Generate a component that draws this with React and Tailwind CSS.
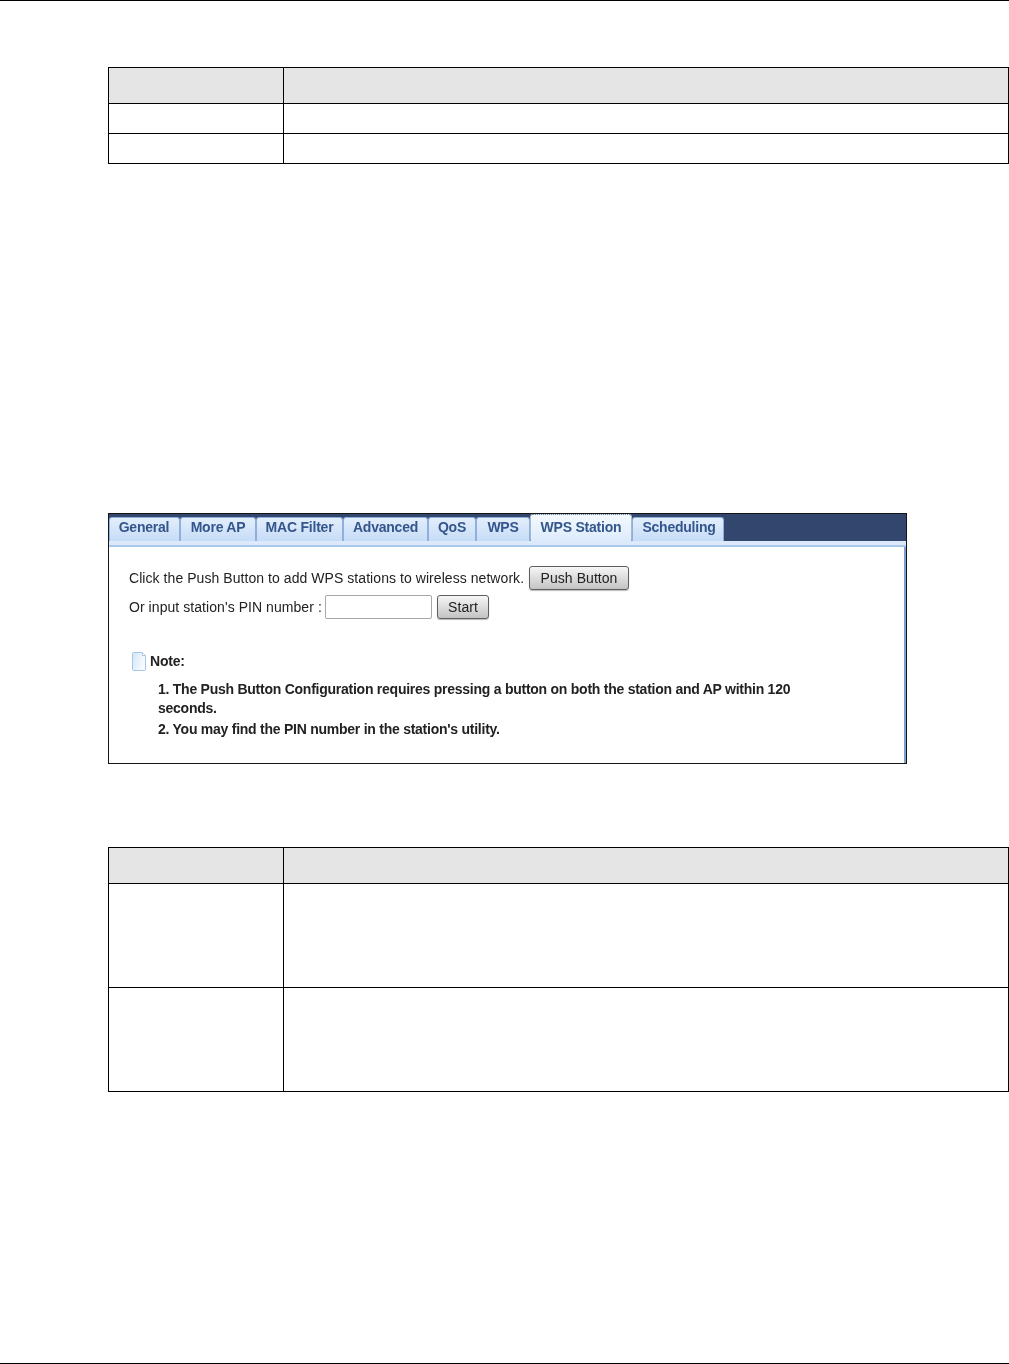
const tabs = [
  { label: "General", width: "w-[71px]", gap: "pr-[1px]" },
  { label: "More AP", width: "w-[76px]", gap: "" },
  { label: "MAC Filter", width: "w-[87px]", gap: "" },
  { label: "Advanced", width: "w-[85px]", gap: "" },
  { label: "QoS", width: "w-[48px]", gap: "" },
  { label: "WPS", width: "w-[54px]", gap: "" },
  { label: "WPS Station", width: "w-[102px]", gap: "", active: true },
  { label: "Scheduling", width: "w-[92px]", gap: "pl-[2px]" },
];

function SpecTable({ rows }) {
  return (
    <div className="ml-[108px] w-[901px] border-t border-l border-r border-black">
      {rows.map((row, i) => (
        <div key={i} className={`flex border-b border-black ${row.height} ${i === 0 ? "bg-[#e5e5e5]" : "bg-white"}`}>
          <div className="w-[175px] border-r border-black" />
          <div className="flex-1" />
        </div>
      ))}
    </div>
  );
}

function Tab({ label, width, gap, active }) {
  return (
    <div
      className={`flex justify-center rounded-t-[3px] border-x border-t text-[14px] font-bold leading-[19px] tracking-[-0.22px] text-[#34568c] ${width} ${gap} ${
        active
          ? "h-[27px] border-dotted border-[#6f7f96] bg-gradient-to-b from-[#f4f9fe] to-[#dcebfc] pt-[3px]"
          : "h-[24px] border-[#8fb0dc] bg-gradient-to-b from-[#e3eefb] to-[#c6dcf7]"
      }`}
    >
      {label}
    </div>
  );
}

function Button({ children, width }) {
  return (
    <button className={`h-[24px] rounded-[3px] border border-[#5f5f5f] bg-gradient-to-b from-[#f6f6f6] to-[#c4c4c4] text-[14px] leading-none text-[#222] shadow-[0_1px_1px_#bbb] ${width}`}>
      {children}
    </button>
  );
}

function NoteIcon() {
  return (
    <svg width="14" height="19" viewBox="0 0 14 19" className="shrink-0">
      <defs>
        <linearGradient id="note-fill" x1="0" y1="0" x2="1" y2="0.4">
          <stop offset="0" stopColor="#d3e5f8" />
          <stop offset="1" stopColor="#f8fbfe" />
        </linearGradient>
      </defs>
      <path d="M0.5 1.5 Q0.5 0.5 1.5 0.5 H10.5 L13.5 3.5 V17.5 Q13.5 18.5 12.5 18.5 H1.5 Q0.5 18.5 0.5 17.5 Z" fill="url(#note-fill)" stroke="#a6c6e8" />
      <path d="M10.5 0.5 V3.5 H13.5" fill="#fff" stroke="#a6c6e8" />
    </svg>
  );
}

export default function App() {
  return (
    <div className="flex h-[1364px] w-[1009px] flex-col overflow-hidden bg-white font-['Liberation_Sans',Arial,sans-serif]">
      <div className="h-px bg-black" />

      <div className="mt-[66px]">
        <SpecTable rows={[{ height: "h-[36px]" }, { height: "h-[30px]" }, { height: "h-[30px]" }]} />
      </div>

      <div className="ml-[108px] mt-[349px] h-[251px] w-[799px] border border-[#151515] bg-white blur-[0.3px]">
        <div className="flex h-[27px] items-end bg-[#33466e]">
          {tabs.map((tab) => (
            <Tab key={tab.label} {...tab} />
          ))}
        </div>
        <div className="h-[6px] border-b-2 border-[#a9c8ee] bg-[#dbe9fb]" />
        <div className="h-[216px] border-r-2 border-[#7d9fd0] pl-[20px] pt-[19px] text-[14px] tracking-[0.06px] text-[#222]">
          <div className="flex h-[24px] items-center">
            <span className="w-[400px]">Click the Push Button to add WPS stations to wireless network.</span>
            <Button width="w-[100px]">Push Button</Button>
          </div>
          <div className="mt-[5px] flex h-[24px] items-center">
            <span className="w-[196px]">Or input station's PIN number :</span>
            <div className="h-[24px] w-[107px] rounded-[2px] border border-[#a8a8a8] bg-white" />
            <div className="ml-[5px] flex">
              <Button width="w-[52px]">Start</Button>
            </div>
          </div>
          <div className="ml-[3px] mt-[32px] flex items-center gap-[4px] text-[14px] tracking-[-0.22px]">
            <NoteIcon />
            <span className="font-bold text-[#222]">Note:</span>
          </div>
          <div className="ml-[29px] mt-[8px] w-[640px] text-[14px] font-bold leading-[19px] tracking-[-0.25px] text-[#222]">
            <p>1. The Push Button Configuration requires pressing a button on both the station and AP within 120 seconds.</p>
            <p className="mt-[2px]">2. You may find the PIN number in the station's utility.</p>
          </div>
        </div>
      </div>

      <div className="mt-[83px]">
        <SpecTable rows={[{ height: "h-[36px]" }, { height: "h-[104px]" }, { height: "h-[104px]" }]} />
      </div>

      <div className="mt-auto h-px bg-black" />
    </div>
  );
}
